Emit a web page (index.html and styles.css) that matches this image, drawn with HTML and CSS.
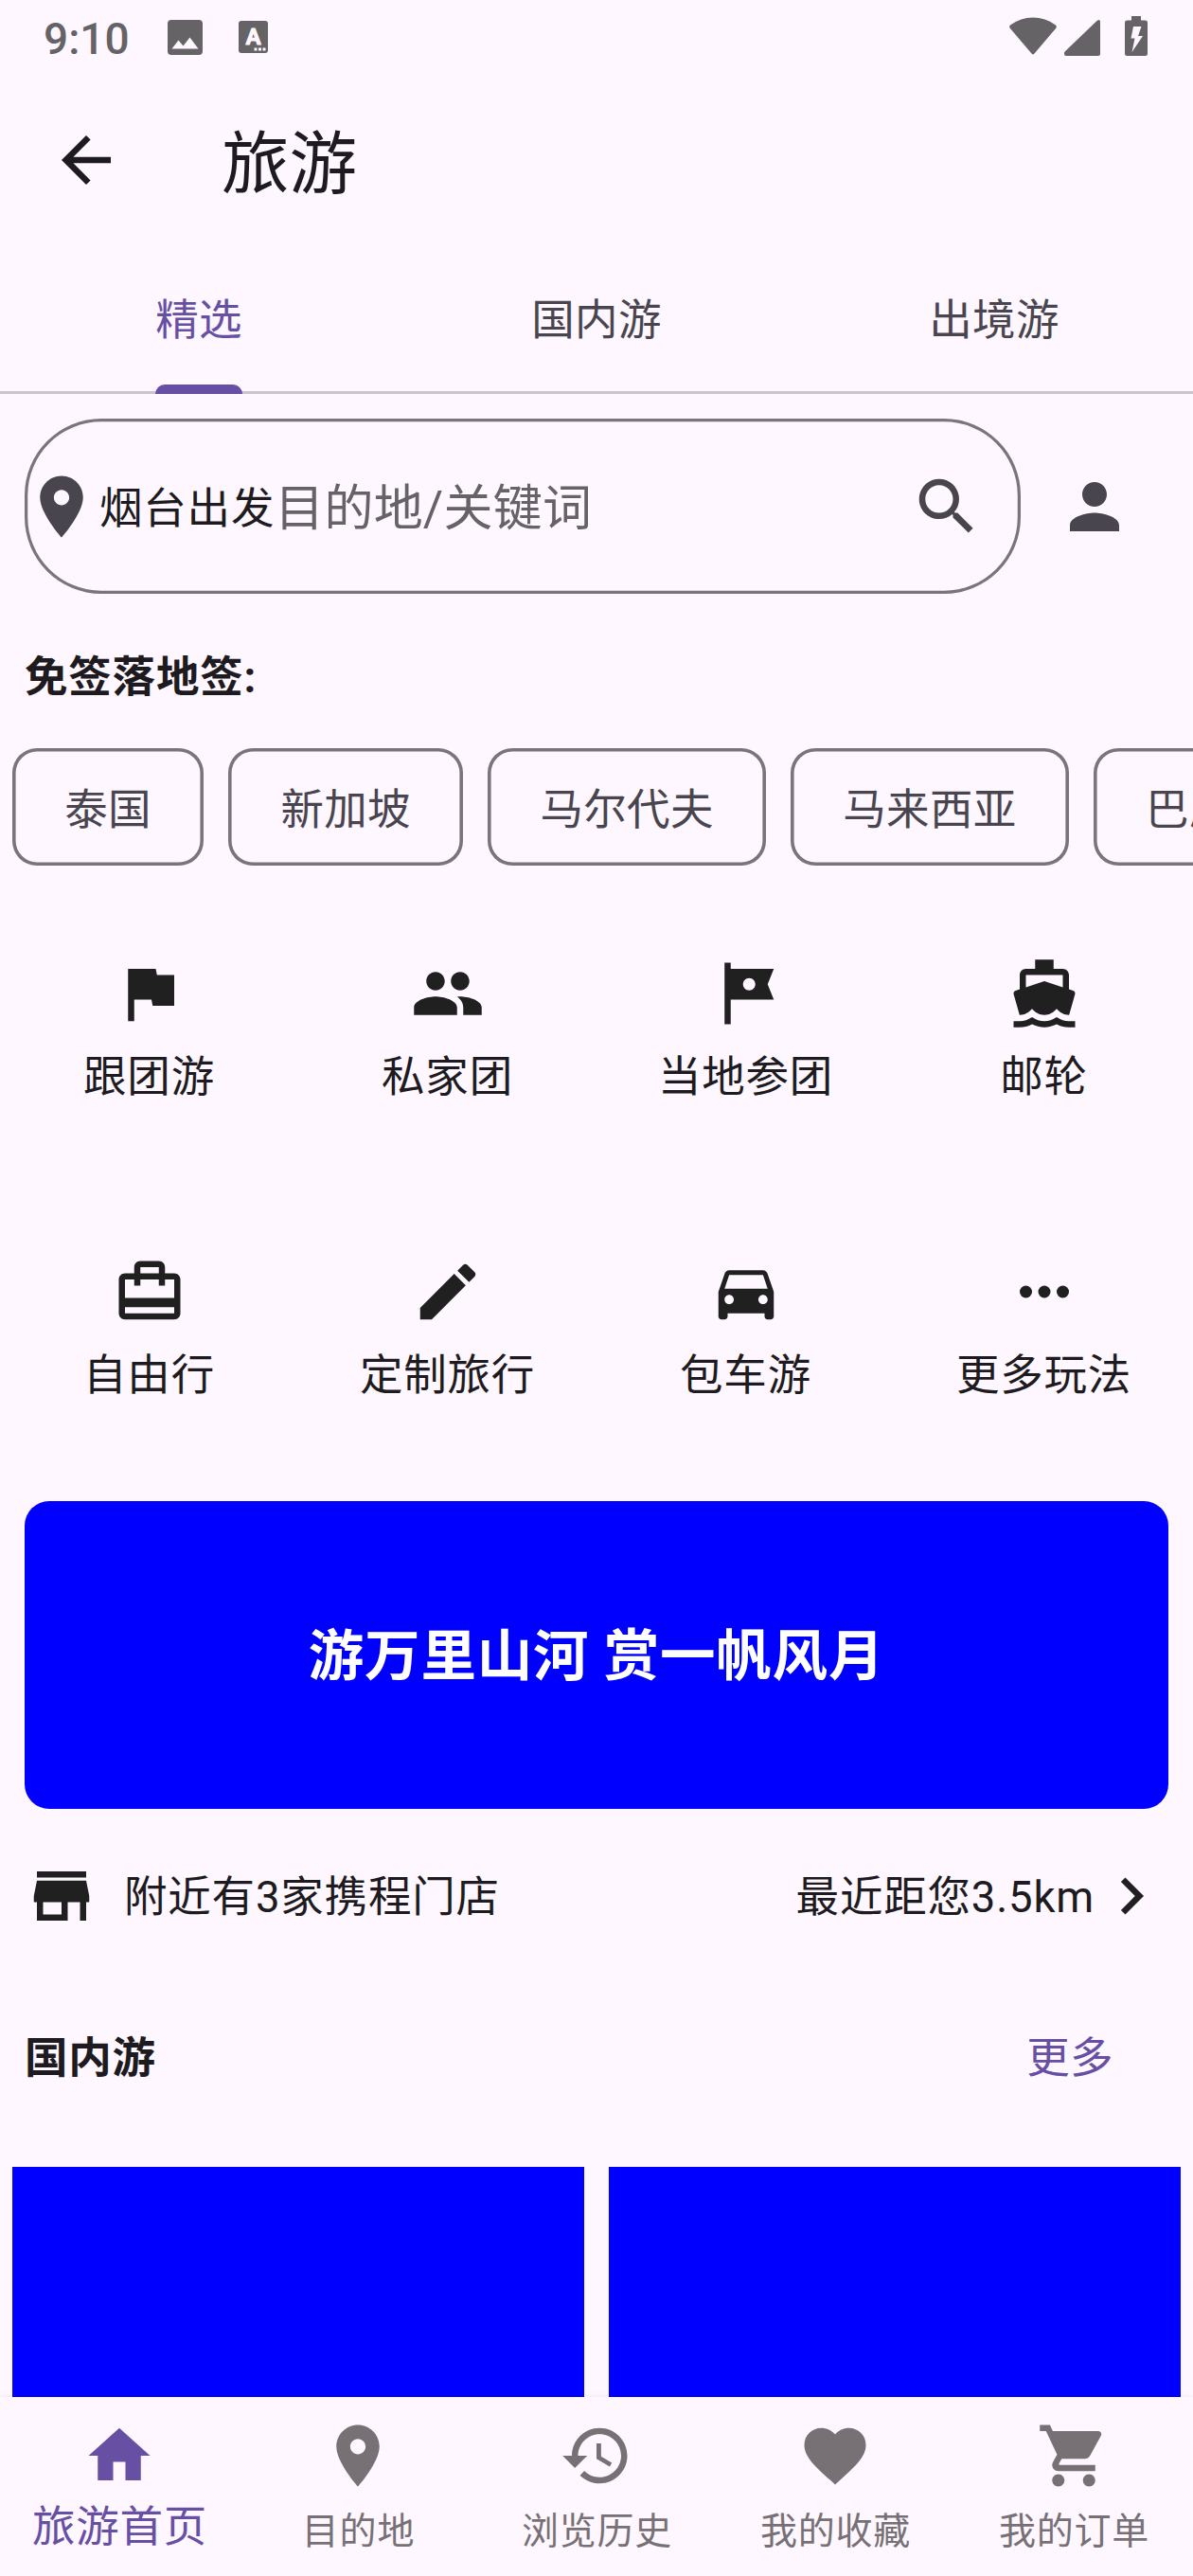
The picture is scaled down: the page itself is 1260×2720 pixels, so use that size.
FILE: index.html
```html
<!DOCTYPE html>
<html lang="zh-CN">
<head>
<meta charset="utf-8">
<title>旅游</title>
<link rel="stylesheet" href="styles.css">
</head>
<body>
<svg class="sprite" aria-hidden="true">
  <symbol id="pin" viewBox="0 0 24 24"><path d="M12 2C8.130 2 5 5.130 5 9c0 5.250 7 13 7 13s7-7.750 7-13c0-3.870-3.130-7-7-7zm0 9.500c-1.380 0-2.500-1.120-2.500-2.500s1.120-2.500 2.500-2.500 2.500 1.120 2.500 2.500-1.120 2.500-2.500 2.500z"/></symbol>
</svg>
<div class="screen">
  <header class="status">
    <span class="clock">9:10</span>
    <svg class="st-image" viewBox="0 0 37 37"><path fill-rule="evenodd" d="M4 0h29a4 4 0 0 1 4 4v29a4 4 0 0 1-4 4H4a4 4 0 0 1-4-4V4a4 4 0 0 1 4-4zM4.500 30.500h28L23.500 18.500 16.500 27.500 11.500 21.500z"/></svg>
    <svg class="st-lang" viewBox="0 0 31 34"><rect width="31" height="34" rx="3"/><text x="15.500" y="24.500" text-anchor="middle">A</text><path class="dots" d="M16.500 28.500h3v3h-3zM21 28.500h3v3h-3zM25.500 28.500h3v3h-3z"/></svg>
    <svg class="st-wifi" viewBox="0 0 50 40"><path d="M1 8.500Q12 .5 25 .5t24 8q1.500 1.500 .3 3.200L26.500 38.500q-1.500 1.800-3 0L.7 11.700Q-.5 10 1 8.500z"/></svg>
    <svg class="st-signal" viewBox="0 0 38 38"><path d="M34.500 1Q38-1.500 38 2.500V36q0 2-2 2H2q-2 0-2-2v-1q0-.8.600-1.500z"/></svg>
    <svg class="st-battery" viewBox="0 0 24 42"><path fill-rule="evenodd" d="M7 0h10v4.500h4.500q2.500 0 2.500 2.500v32.500q0 2.500-2.500 2.500h-19Q0 42 0 39.500V7q0-2.500 2.500-2.500H7zM9 11h8.500l-3.500 10h5L7.500 38l3-14.500H6.500z"/></svg>
  </header>

  <div class="appbar">
    <svg class="icon" viewBox="0 0 24 24"><path d="M20 11H7.830l5.590-5.590L12 4l-8 8 8 8 1.410-1.410L7.830 13H20v-2z"/></svg>
    <h1 class="title">旅游</h1>
  </div>

  <nav class="tabs">
    <div class="tab active"><span>精选</span></div>
    <div class="tab"><span>国内游</span></div>
    <div class="tab"><span>出境游</span></div>
  </nav>

  <div class="search-row">
    <div class="search">
      <svg class="icon"><use href="#pin"/></svg>
      <span class="from">烟台出发</span>
      <span class="hint">目的地/关键词</span>
      <svg class="icon find" viewBox="0 0 24 24"><path d="M15.500 14h-.79l-.28-.27C15.410 12.590 16 11.110 16 9.500 16 5.910 13.090 3 9.500 3S3 5.910 3 9.500 5.910 16 9.500 16c1.610 0 3.090-.59 4.230-1.570l.27.28v.79l5 4.990L20.490 19l-4.990-5zm-6 0C7.010 14 5 11.990 5 9.500S7.010 5 9.500 5 14 7.010 14 9.500 11.990 14 9.500 14z"/></svg>
    </div>
    <svg class="icon" viewBox="0 0 24 24"><path d="M12 12c2.210 0 4-1.790 4-4s-1.790-4-4-4-4 1.790-4 4 1.790 4 4 4zm0 2c-2.670 0-8 1.340-8 4v2h16v-2c0-2.660-5.330-4-8-4z"/></svg>
  </div>

  <h2 class="visa">免签落地签:</h2>
  <div class="chips">
    <span class="chip">泰国</span>
    <span class="chip">新加坡</span>
    <span class="chip">马尔代夫</span>
    <span class="chip">马来西亚</span>
    <span class="chip">巴厘岛</span>
  </div>

  <div class="grid">
    <div class="cell"><svg class="icon" viewBox="0 0 24 24"><path d="M14.400 6L14 4H5v17h2v-7h5.600l.4 2h7V6z"/></svg><span>跟团游</span></div>
    <div class="cell"><svg class="icon" viewBox="0 0 24 24"><path d="M16 11c1.660 0 2.990-1.340 2.990-3S17.660 5 16 5c-1.660 0-3 1.340-3 3s1.340 3 3 3zm-8 0c1.660 0 2.990-1.340 2.990-3S9.660 5 8 5C6.340 5 5 6.340 5 8s1.340 3 3 3zm0 2c-2.330 0-7 1.170-7 3.500V19h14v-2.500c0-2.330-4.670-3.500-7-3.500zm8 0c-.29 0-.62.020-.97.050 1.160.84 1.970 1.970 1.970 3.450V19h6v-2.500c0-2.330-4.670-3.500-7-3.500z"/></svg><span>私家团</span></div>
    <div class="cell"><svg class="icon" viewBox="0 0 24 24"><path d="M21 4H7V2H5v20h2v-8h14l-2-5 2-5zm-6 5c0 1.100-.9 2-2 2s-2-.9-2-2 .9-2 2-2 2 .9 2 2z"/></svg><span>当地参团</span></div>
    <div class="cell"><svg class="icon" viewBox="0 0 24 24"><path d="M20 21c-1.390 0-2.780-.47-4-1.320-2.440 1.710-5.560 1.710-8 0C6.780 20.530 5.390 21 4 21H2v2h2c1.380 0 2.740-.35 4-.99 2.520 1.290 5.480 1.290 8 0 1.260.65 2.620.99 4 .99h2v-2h-2zM3.950 19H4c1.600 0 3.020-.88 4-2 .98 1.120 2.400 2 4 2s3.020-.88 4-2c.98 1.120 2.400 2 4 2h.050l1.890-6.680c.080-.26.060-.54-.060-.78s-.34-.42-.6-.5L20 10.620V6c0-1.100-.9-2-2-2h-3V1H9v3H6c-1.100 0-2 .9-2 2v4.620l-1.290.42c-.26.080-.48.26-.6.5s-.15.520-.060.780L3.950 19zM6 6h12v3.970L12 8 6 9.970V6z"/></svg><span>邮轮</span></div>
    <div class="cell"><svg class="icon" viewBox="0 0 24 24"><path d="M20 6h-3V4c0-1.110-.89-2-2-2H9c-1.110 0-2 .89-2 2v2H4c-1.110 0-2 .89-2 2v11c0 1.110.89 2 2 2h16c1.110 0 2-.89 2-2V8c0-1.110-.89-2-2-2zM9 4h6v2H9V4zm11 15H4v-2h16v2zm0-5H4V8h3v2h2V8h6v2h2V8h3v6z"/></svg><span>自由行</span></div>
    <div class="cell"><svg class="icon" viewBox="0 0 24 24"><path d="M3 17.250V21h3.750L17.810 9.940l-3.750-3.750L3 17.250zM20.710 7.040c.39-.39.39-1.020 0-1.410l-2.340-2.340c-.39-.39-1.020-.39-1.410 0l-1.830 1.830 3.750 3.750 1.830-1.830z"/></svg><span>定制旅行</span></div>
    <div class="cell"><svg class="icon" viewBox="0 0 24 24"><path d="M18.920 6.010C18.720 5.420 18.160 5 17.500 5h-11c-.66 0-1.210.42-1.420 1.010L3 12v8c0 .55.45 1 1 1h1c.55 0 1-.45 1-1v-1h12v1c0 .55.45 1 1 1h1c.55 0 1-.45 1-1v-8l-2.080-5.990zM6.500 16c-.83 0-1.500-.67-1.500-1.500S5.670 13 6.500 13s1.500.67 1.500 1.500S7.330 16 6.500 16zm11 0c-.83 0-1.500-.67-1.500-1.500s.67-1.500 1.500-1.500 1.500.67 1.500 1.500-.67 1.500-1.500 1.500zM5 11l1.500-4.500h11L19 11H5z"/></svg><span>包车游</span></div>
    <div class="cell"><svg class="icon" viewBox="0 0 24 24"><circle cx="6" cy="12" r="2"/><circle cx="12" cy="12" r="2"/><circle cx="18" cy="12" r="2"/></svg><span>更多玩法</span></div>
  </div>

  <div class="banner">游万里山河 赏一帆风月</div>

  <div class="store">
    <svg class="icon" viewBox="0 0 24 24"><path d="M20 4H4v2h16V4zm1 10v-2l-1-5H4l-1 5v2h1v6h10v-6h4v6h2v-6h1zm-9 4H6v-4h6v4z"/></svg>
    <span class="near">附近有3家携程门店</span>
    <span class="distance">最近距您3.5km</span>
    <svg class="icon" viewBox="0 0 24 24"><path d="M10 6L8.590 7.410 13.170 12l-4.580 4.590L10 18l6-6z"/></svg>
  </div>

  <div class="section">
    <h2>国内游</h2>
    <a class="more">更多</a>
  </div>
  <div class="photos"><div class="photo"></div><div class="photo"></div></div>

  <nav class="bottom">
    <div class="item active"><svg class="icon" viewBox="0 0 24 24"><path d="M10 20v-6h4v6h5v-8h3L12 3 2 12h3v8z"/></svg><span>旅游首页</span></div>
    <div class="item"><svg class="icon"><use href="#pin"/></svg><span>目的地</span></div>
    <div class="item"><svg class="icon" viewBox="0 0 24 24"><path d="M13 3c-4.970 0-9 4.030-9 9H1l3.890 3.890.070.140L9 12H6c0-3.870 3.130-7 7-7s7 3.130 7 7-3.130 7-7 7c-1.930 0-3.680-.79-4.940-2.060l-1.420 1.420C8.270 19.990 10.510 21 13 21c4.970 0 9-4.030 9-9s-4.030-9-9-9zm-1 5v5l4.280 2.540.72-1.210-3.500-2.080V8H12z"/></svg><span>浏览历史</span></div>
    <div class="item"><svg class="icon" viewBox="0 0 24 24"><path d="M12 21.350l-1.450-1.320C5.400 15.360 2 12.280 2 8.500 2 5.420 4.420 3 7.500 3c1.740 0 3.410.81 4.500 2.090C13.090 3.810 14.760 3 16.500 3 19.580 3 22 5.420 22 8.500c0 3.780-3.400 6.860-8.550 11.540L12 21.350z"/></svg><span>我的收藏</span></div>
    <div class="item"><svg class="icon" viewBox="0 0 24 24"><path d="M7 18c-1.100 0-1.990.9-1.990 2S5.900 22 7 22s2-.9 2-2-.9-2-2-2zM1 2v2h2l3.600 7.590-1.350 2.450c-.16.280-.25.610-.25.960 0 1.100.9 2 2 2h12v-2H7.420c-.14 0-.25-.11-.25-.25l.030-.12.9-1.630h7.450c.75 0 1.410-.41 1.750-1.030l3.580-6.490c.080-.14.120-.31.120-.48 0-.55-.45-1-1-1H5.210l-.94-2H1zm16 16c-1.100 0-1.990.9-1.990 2s.89 2 1.990 2 2-.9 2-2-.9-2-2-2z"/></svg><span>我的订单</span></div>
  </nav>
</div>
</body>
</html>
```
FILE: styles.css
```css
* { box-sizing: border-box; }
body { margin: 0; }
.screen {
  width: 1260px;
  height: 2720px;
  overflow: hidden;
  display: flex;
  flex-direction: column;
  background: #fef7ff;
  color: #1d1b20;
  font: 400 45.5px/65px Roboto, "Noto Sans CJK SC", sans-serif;
  letter-spacing: 0.81px;
  white-space: nowrap;
}
.screen > * { flex: none; }
.sprite { display: none; }
.icon { width: 78px; height: 78px; flex: none; display: block; fill: currentColor; }
h1, h2 { margin: 0; font-size: inherit; }

/* status bar */
.status { height: 78px; display: flex; align-items: flex-start; color: #666366; fill: #666366; }
.clock { width: 131px; margin: 14px 0 0 46px; line-height: 54px; font-size: 46px; font-weight: 500; letter-spacing: 0; }
.st-image { width: 37px; height: 37px; margin-top: 21px; }
.st-lang { width: 31px; height: 34px; margin: 22px auto 0 38px; }
.st-lang text { font: 700 24px Roboto, sans-serif; letter-spacing: 0; fill: #fef7ff; stroke: #fef7ff; stroke-width: 0.8px; stroke-linejoin: round; }
.st-lang .dots { fill: #fef7ff; }
.st-wifi { width: 50px; height: 40px; margin-top: 18px; }
.st-signal { width: 38px; height: 38px; margin: 21px 0 0 8px; }
.st-battery { width: 24px; height: 42px; margin: 17px 48px 0 26px; }

/* app bar */
.appbar { height: 182px; padding: 0 52px; display: flex; align-items: center; gap: 104px; }
.title { padding-top: 9px; font-size: 71.5px; line-height: 90px; font-weight: 400; letter-spacing: 0; }

.tabs { height: 156px; display: flex; border-bottom: 3px solid #cac4d0; color: #49454f; letter-spacing: 0.33px; }
.tab { flex: 1; display: flex; justify-content: center; }
.tab span { height: 156px; line-height: 158px; }
.tab.active span { position: relative; color: #6750a4; }
.tab.active span::after {
  content: "";
  position: absolute;
  left: 0;
  right: 0;
  bottom: 0;
  height: 10px;
  border-radius: 10px 10px 0 0;
  background: #6750a4;
}

/* search */
.search-row { margin-top: 26px; padding: 0 65px 0 26px; display: flex; align-items: center; gap: 39px; color: #49454f; }
.search { width: 1052px; height: 185px; padding-right: 39px; display: flex; align-items: center; border-radius: 81px; box-shadow: inset 0 0 0 3.25px #79747e; }
.from { padding: 6px 0 0 1px; color: #1d1b20; }
.hint { padding-top: 5px; color: #666366; font-size: 52px; letter-spacing: 0.2px; }
.find { margin-left: auto; }

.visa { margin: 56px 26px 0; font-weight: 700; }
.chips { display: flex; gap: 26px; margin-top: 42px; padding-left: 13px; color: #49454f; letter-spacing: 0.33px; }
.chip { flex: none; height: 124px; line-height: 131px; padding: 0 55.25px; border-radius: 26px; box-shadow: inset 0 0 0 3.6px #79747e; }

.grid { display: grid; grid-template-columns: repeat(4, 315px); grid-auto-rows: 315px; margin-top: 26px; }
.cell { display: flex; flex-direction: column; align-items: center; padding-top: 70px; gap: 17px; }
.cell .icon, .store .icon { color: #212021; }

.banner { height: 325px; margin: 15px 26px 0; border-radius: 26px; background: #0000ff; color: #fff; text-align: center; font-size: 58.5px; line-height: 329px; font-weight: 700; }
.store { height: 78px; margin: 53px 26px 0; display: flex; align-items: center; }
.near { margin: 0 auto 0 26px; padding: 2px 0 0 1px; }
.distance { padding-top: 2px; }

.section { height: 156px; margin: 53px 26px 0; padding-top: 3px; display: flex; align-items: center; justify-content: space-between; }
.section h2 { font-weight: 700; }
.more { width: 208px; text-align: center; color: #6750a4; letter-spacing: 0.33px; }
.photos { flex: none; height: 243px; margin-top: 38px; padding: 0 13px; display: grid; grid-template-columns: 1fr 1fr; gap: 26px; }
.photo { background: #0000ff; }

.bottom { height: 189px; display: flex; background: #fef7ff; color: #777175; box-shadow: 0 -1px 5px rgba(0, 0, 0, 0.06); }
.item { flex: 1; padding-top: 23px; display: flex; flex-direction: column; align-items: center; font-size: 39px; }
.item span { line-height: 56px; margin-top: 13px; padding-left: 1px; }
.item.active { color: #6750a4; font-size: 45.5px; }
.item.active span { margin-top: 9px; }
```
